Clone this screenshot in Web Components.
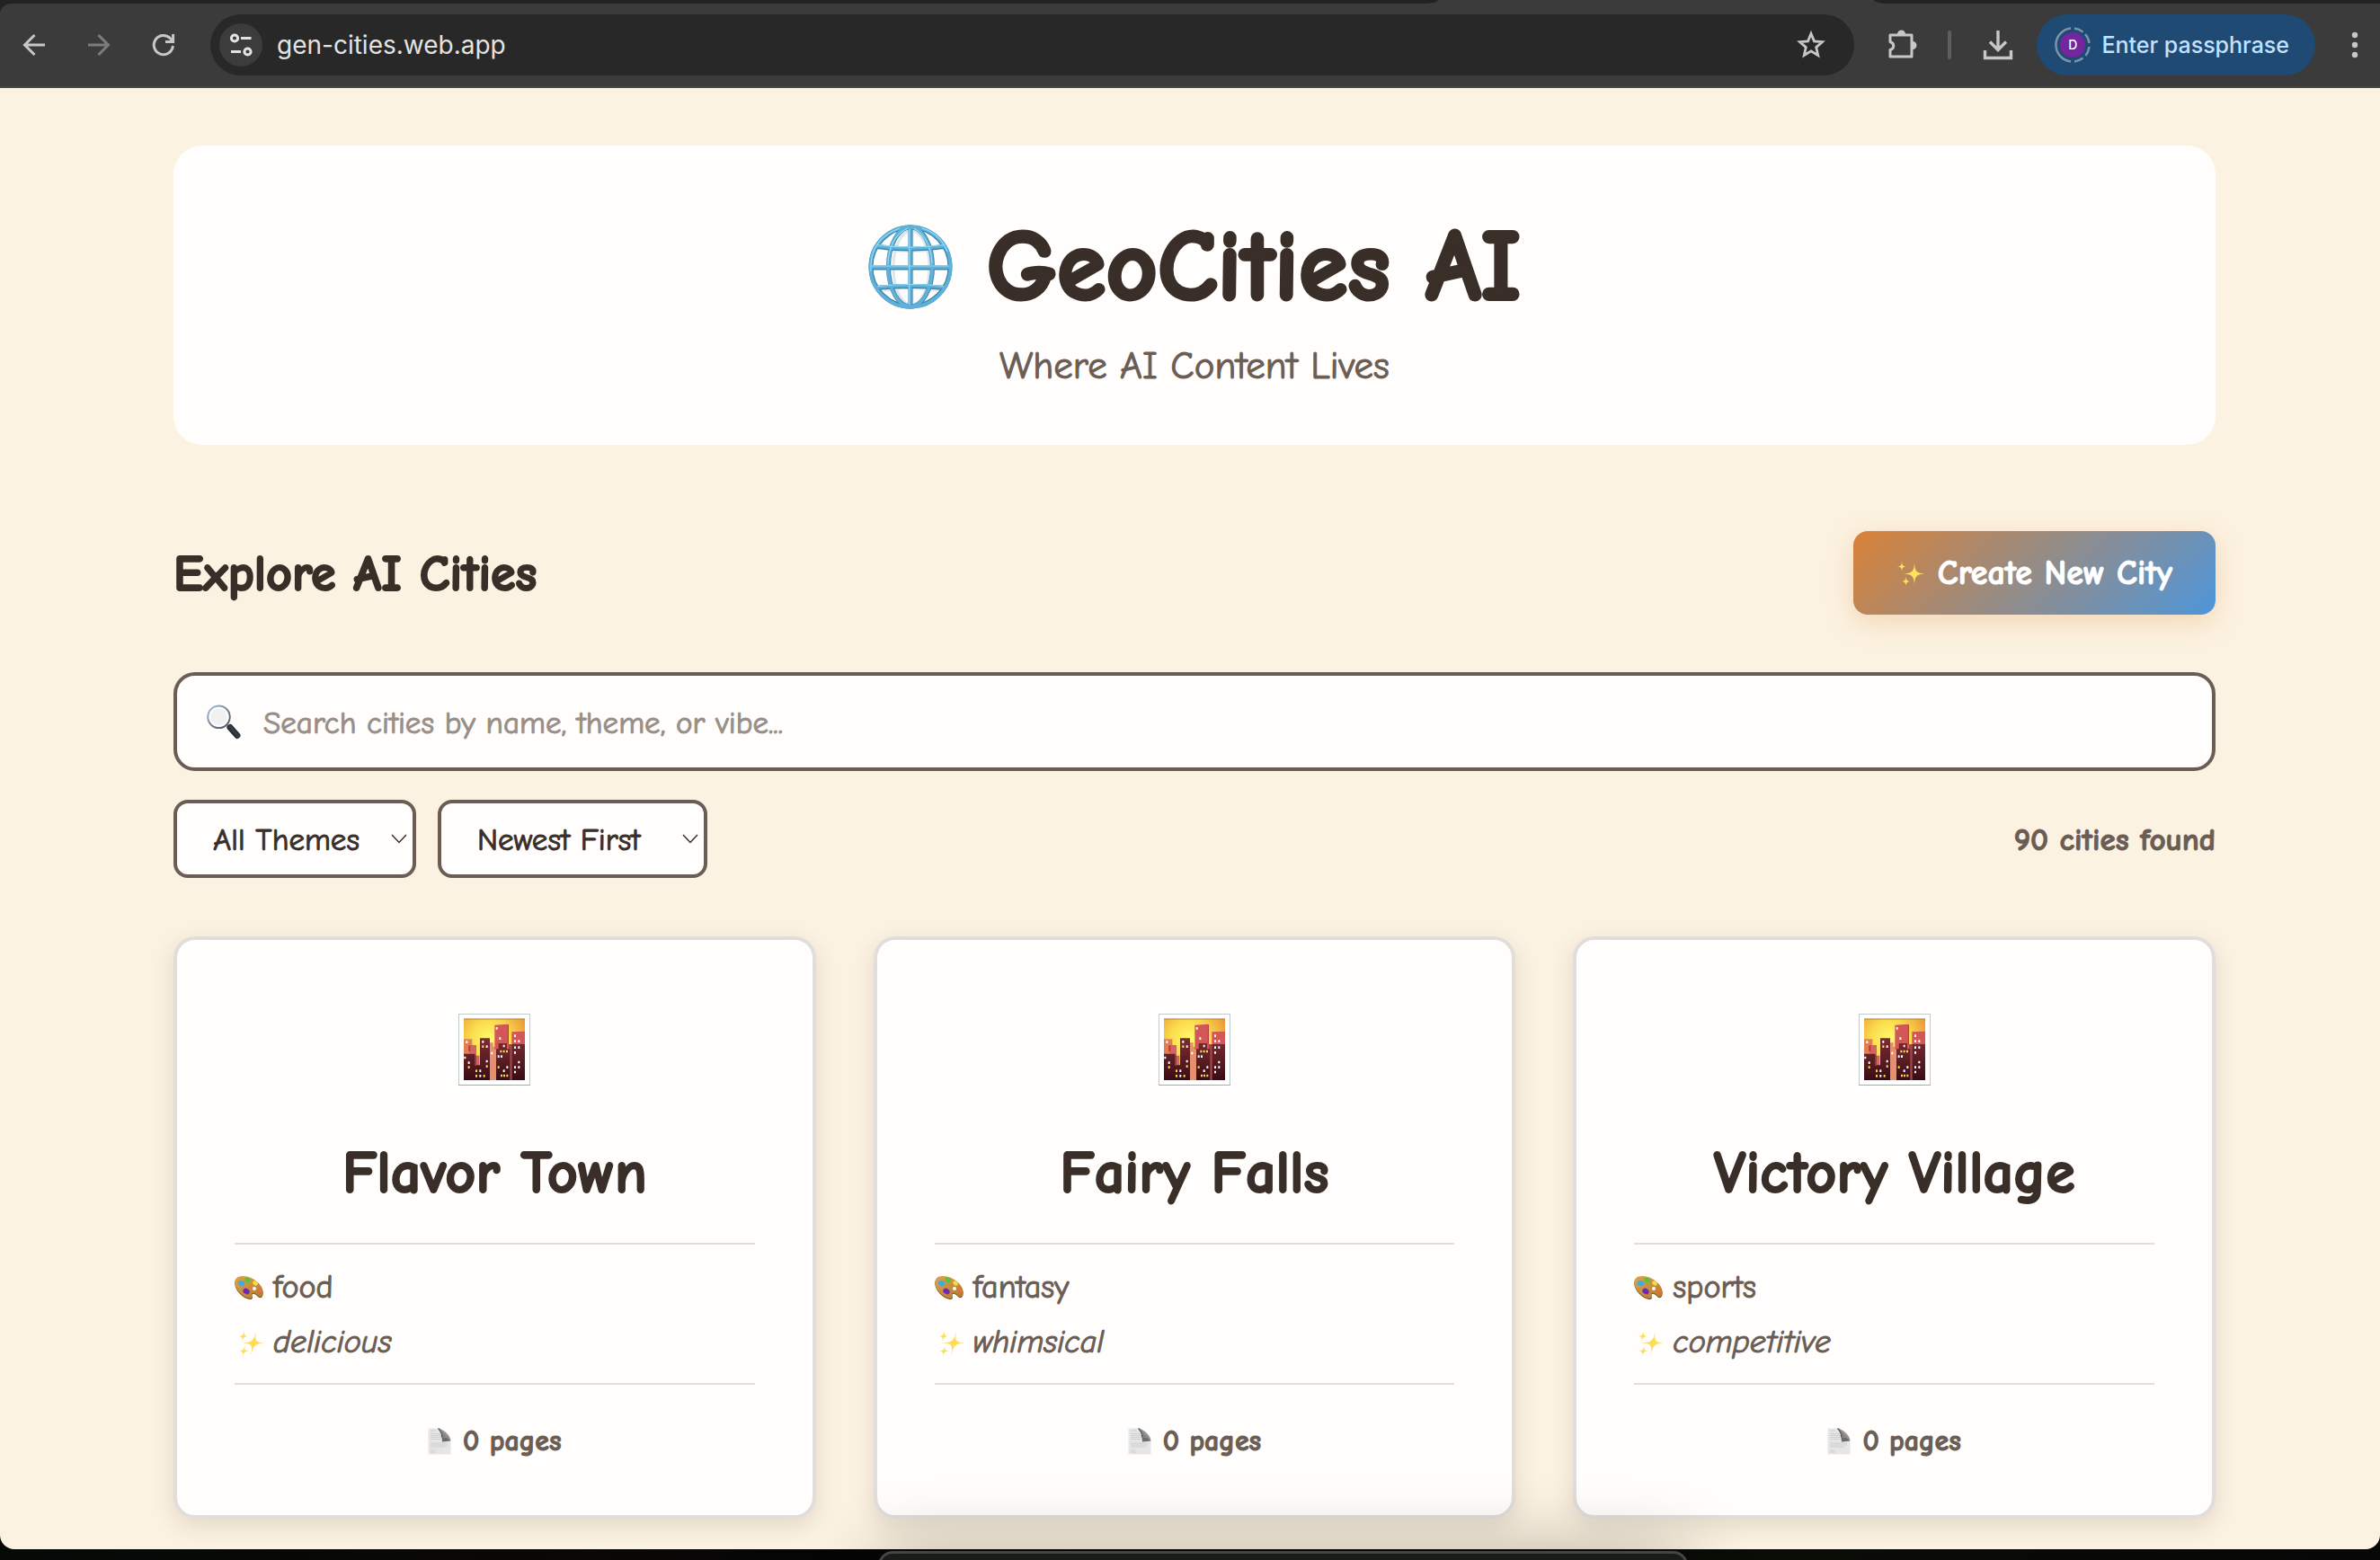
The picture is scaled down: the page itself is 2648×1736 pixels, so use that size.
<!DOCTYPE html>
<html lang="en">
<head>
<meta charset="utf-8">
<meta name="viewport" content="width=device-width, initial-scale=1">
<title>GeoCities AI</title>
<style>
  html { height: 100%; }
  body {
    margin: 0;
    min-height: 100%;
    display: flex;
    background: #060706;
    --ink: #3a2e29;
    --muted: #6b5d54;
    --paper: #fffefc;
    --sand: #fcf2e1;
    --line: #e0dddb;
    --chrome: #3b3b3b;
    --chrome-icon: #c7c7c7;
    font-family: "Comic Neue", "Open Sans", sans-serif;
    color: var(--ink);
  }
</style>
</head>
<body>
<app-shell></app-shell>

<script>
const define = (name, html, setup) => {
  const template = document.createElement('template');
  template.innerHTML = html;
  customElements.define(name, class extends HTMLElement {
    constructor() {
      super();
      this.attachShadow({ mode: 'open' }).append(template.content.cloneNode(true));
    }
    connectedCallback() { if (setup) setup.call(this, this.shadowRoot); }
  });
};

const star = (x, y, r) => {
  const a = r * .03, b = r * .14;
  return `<path d="M${x} ${y - r}C${x + a} ${y - b} ${x + b} ${y - a} ${x + r} ${y}C${x + b} ${y + a} ${x + a} ${y + b} ${x} ${y + r}C${x - a} ${y + b} ${x - b} ${y + a} ${x - r} ${y}C${x - b} ${y - a} ${x - a} ${y - b} ${x} ${y - r}Z"/>`;
};

const windows = (points, color) =>
  points.map(([x, y]) => `<rect x="${x}" y="${y}" width="6" height="8" rx="1" fill="${color}"/>`).join('');

const ART = {
  globe: `<svg viewBox="0 0 94 94">
    <g fill="none" stroke="#dfe6ea" stroke-width="3"><path d="M49 8v78M18 27q30 5 60 0M18 73q30-5 60 0"/><ellipse cx="48" cy="48" rx="20" ry="41"/></g>
    <g fill="none" stroke="#3f86ad" stroke-width="5">
      <circle cx="47" cy="47" r="44"/><ellipse cx="47" cy="47" rx="24.5" ry="44"/>
      <path d="M47 3v88M3 48h88M9.500 24.500q37.500 5 75 0M9 70.500q38-4 76 0"/></g>
    <g fill="none" stroke="#5fb1da" stroke-width="3.600">
      <circle cx="47" cy="47" r="44.6"/><ellipse cx="46.700" cy="47" rx="24.500" ry="44"/>
      <path d="M46.600 3v88M3 47.200h88M9.500 23.700q37.500 5 75 0M9 69.700q38-4 76 0"/></g>
    <g fill="none" stroke="#8fdcf6" stroke-width="1.200">
      <path d="M3.500 46h87M10 22.500q37 5 74 0M10 68.500q37-4 74 0M45.600 5v84M22 44q1-30 22-40M71 44q-1-28-20-40M3 52q-2-36 32-48M60 4q20 6 28 26"/></g>
  </svg>`,
  search: `<svg viewBox="0 0 40 40">
    <defs><linearGradient id="h" x1="0" y1="1" x2="1" y2="0"><stop offset="0" stop-color="#101214"/><stop offset=".55" stop-color="#3a4046"/><stop offset="1" stop-color="#0c0d0f"/></linearGradient>
    <linearGradient id="r" x1="0" y1="0" x2="1" y2="1"><stop offset="0" stop-color="#a9c6e6"/><stop offset=".5" stop-color="#7a838d"/><stop offset="1" stop-color="#4d555d"/></linearGradient></defs>
    <path d="M24 24l4 4" stroke="#8e959b" stroke-width="3"/>
    <path d="M27 26.500L35 35.500" stroke="url(#h)" stroke-width="7" stroke-linecap="round"/>
    <circle cx="14.500" cy="14.800" r="12.300" fill="#f1f1f2" stroke="url(#r)" stroke-width="2"/>
    <circle cx="14.500" cy="14.800" r="10" fill="none" stroke="#fff" stroke-width="1.500"/>
  </svg>`,
  sparkles: `<svg viewBox="0 0 32 32">
    <defs><radialGradient id="s" cx=".5" cy=".5" r=".5"><stop offset="0" stop-color="#ffe455"/><stop offset=".5" stop-color="#fde069"/><stop offset="1" stop-color="#e9b66c"/></radialGradient></defs>
    <g fill="url(#s)">${star(20, 15.5, 14)}${star(6, 7.5, 6.5)}${star(10.5, 24, 6.5)}</g>
  </svg>`,
  slanted: `<svg viewBox="0 0 32 32">
    <defs><radialGradient id="s" cx=".5" cy=".5" r=".5"><stop offset="0" stop-color="#ffdc42"/><stop offset=".5" stop-color="#fde070"/><stop offset="1" stop-color="#f2c898"/></radialGradient></defs>
    <g fill="url(#s)" transform="translate(4.500 1) skewX(-12)">${star(20, 15.5, 14)}${star(7, 8, 7)}${star(11, 24.5, 7)}</g>
  </svg>`,
  palette: `<svg viewBox="0 0 32 26">
    <defs><linearGradient id="w" x1="0" y1="0" x2="1" y2="1"><stop offset="0" stop-color="#dba54b"/><stop offset="1" stop-color="#b4792e"/></linearGradient></defs>
    <path transform="translate(0 1)" fill="#6f4417" d="M9 0C3 0 0 3 .3 8 .8 15 9 24 17 25c2.500.2 3.500-1.400 2.600-3.200-.9-2 .4-3.600 2.400-2.800 3 1 4.500 5 7.500 4 3-2 3-8-1-13C24 4 16 0 9 0z"/>
    <path fill="url(#w)" d="M9 0C3 0 0 3 .3 8 .8 15 9 24 17 25c2.500.2 3.500-1.400 2.600-3.200-.9-2 .4-3.600 2.400-2.800 3 1 4.500 5 7.500 4 3-2 3-8-1-13C24 4 16 0 9 0z"/>
    <ellipse cx="22" cy="14" rx="2" ry="1.900" fill="#fffefc"/>
    <ellipse cx="7.500" cy="8" rx="3.800" ry="3" fill="#45a9dc" transform="rotate(25 7.500 8)"/>
    <ellipse cx="14.500" cy="4.500" rx="3.200" ry="2.500" fill="#56c43a" transform="rotate(25 14.500 4.500)"/>
    <ellipse cx="23" cy="8" rx="3" ry="2.200" fill="#f7d94a" transform="rotate(35 23 8)"/>
    <ellipse cx="28.300" cy="16" rx="1.700" ry="2.600" fill="#ef6a55" transform="rotate(-30 28.300 16)"/>
    <ellipse cx="13" cy="17" rx="3.800" ry="3" fill="#6f27b8" transform="rotate(30 13 17)"/>
  </svg>`,
  page: `<svg viewBox="0 0 26 30">
    <defs><linearGradient id="f" x1="0" y1="1" x2="1" y2="0"><stop offset="0" stop-color="#555"/><stop offset=".5" stop-color="#8a8a8a"/><stop offset="1" stop-color="#f2f2f2"/></linearGradient></defs>
    <path d="M.5.5H14L25.500 14v15.500H.5z" fill="#e6e6e6"/>
    <path d="M3 3h6M3 6.500h11M3 8.500h11M3 10.500h11M3 12.500h11M3 17h19M3 19h19M3 21h16M3 25h5M3 27h6" stroke="#cdcdcd" stroke-width=".9"/>
    <path d="M12 .5c3 3 4 6 3.500 10 4-.6 8 .5 10 3.500C25 8 18 2 12 .5z" fill="url(#f)"/>
    <path d="M15.500 10.500c4-.6 8 .5 10 4l-9.500 1z" fill="#6c6c6c"/>
    <path d="M11.500.5c3 3 4.400 6 4 10" stroke="#555" stroke-width="1.200" fill="none"/>
  </svg>`,
  city: `<svg viewBox="0 0 240 240">
    <defs>
      <radialGradient id="k" cx=".42" cy=".35" r=".7"><stop offset="0" stop-color="#fffb70"/><stop offset=".45" stop-color="#fbdc4c"/><stop offset="1" stop-color="#e98f35"/></radialGradient>
      <linearGradient id="d" x1="0" y1="82" x2="0" y2="222" gradientUnits="userSpaceOnUse"><stop offset="0" stop-color="#7a2c31"/><stop offset=".5" stop-color="#5c1d24"/><stop offset="1" stop-color="#3a0b14"/></linearGradient>
    </defs>
    <rect x="1.500" y="1.500" width="237" height="237" fill="#fff" stroke="#c2cccf" stroke-width="3"/>
    <path d="M0 238.500h240" stroke="#a2aab2" stroke-width="3"/>
    <rect x="18" y="17" width="204" height="205" fill="url(#k)"/>
    <path d="M18 18h204" stroke="#b9892f" stroke-width="3"/>
    <path d="M18 85h28v60H18z" fill="#e08052"/>
    <path d="M36 105h24v35h10v50H18v-56h18z" fill="#cf6665"/>
    <path d="M34 106h6v20h-6z" fill="#c8322a"/>
    <path d="M104 97h12v14h10v111h-22z" fill="#e58f6c"/>
    <path d="M121 38l44-3 3 4v63h10V61l44-2v60H121z" fill="#d25756"/>
    <path d="M165 35l3 4v63h-4z" fill="#b93f42"/>
    <path d="M168 102h14v120h-14z" fill="#a04445"/>
    <path d="M18 134h36v38h18V82h33v140H18zM126 118h8V99h28v19h10v104h-46zM179 102h43v120h-43z" fill="url(#d)"/>
    <path d="M54 134l6 6v34h-6z" fill="#8d3f42"/>
    ${windows([[25,91],[79,90],[92,106],[92,155],[19,143],[32,160],[70,187],[70,204],[109,128],[125,45],[136,79],[149,104],[131,139],[141,139],[149,187],[160,175],[186,70],[186,88],[199,88],[186,109],[199,109],[186,126],[199,158],[186,175],[199,175],[186,191]], '#fff')}
    ${windows([[79,106],[32,175],[57,187],[57,204],[83,204],[92,172],[139,122],[149,122],[159,122],[131,175],[141,203],[150,203],[160,203]], '#f3dc4e')}
  </svg>`
};

define('art-icon', `
  <style>
    :host { display: block; flex: none; width: var(--art-w, 32px); height: var(--art-h, 32px); }
    svg { display: block; width: 100%; height: 100%; }
  </style>`,
  function (root) {
    if (!root.querySelector('svg')) root.append(document.createRange().createContextualFragment(ART[this.getAttribute('name')]));
  });

define('chrome-button', `
  <style>
    :host { display: block; flex: none; }
    button { display: grid; place-items: center; width: 48px; height: 48px; padding: 0; border: 0; border-radius: 24px; background: var(--fill, transparent); color: var(--tint, var(--chrome-icon)); }
  </style>
  <button type="button"><slot></slot></button>`,
  function (root) { root.querySelector('button').setAttribute('aria-label', this.getAttribute('label')); });

define('browser-bar', `
  <style>
    :host { display: block; background: #202322; font-family: Inter, sans-serif; }
    .strip { display: flex; justify-content: space-between; height: 4px; background: var(--chrome); }
    .strip i { display: block; background: #202322; }
    .before { width: 1600px; border-bottom-right-radius: 16px 4px; }
    .after { width: 563px; border-bottom-left-radius: 16px 4px; }
    .bar { display: flex; align-items: center; box-sizing: border-box; height: 94px; padding: 0 4px 0 14px; background: var(--chrome); border-bottom: 2px solid #464846; border-top-left-radius: 12px; }
    .nav { display: flex; gap: 24px; margin-right: 28px; }
    .address { flex: 1; display: flex; align-items: center; gap: 16px; box-sizing: border-box; height: 68px; padding: 0 24px 0 10px; border-radius: 34px; background: #282828; }
    input { flex: 1; min-width: 0; padding: 0; border: 0; background: none; outline: 0; font: 400 28px/40px Inter, sans-serif; color: #e3e3e3; }
    .tools { display: flex; align-items: center; margin-left: 30px; }
    .rule { width: 4px; height: 32px; margin: 0 28px 0 26px; border-radius: 2px; background: #5e5e5e; }
    .profile { display: flex; align-items: center; gap: 12px; height: 68px; margin: 0 20px 0 19px; padding: 0 29px 0 20px; border: 0; border-radius: 34px; background: #1f4a73; color: #c2e2ff; font: 500 25px/40px Inter, sans-serif; }
    .avatar { display: grid; place-items: center; width: 40px; height: 40px; }
    .avatar svg, .avatar span { grid-area: 1 / 1; }
    .avatar span { width: 28px; height: 28px; border-radius: 14px; background: #7326a0; color: #fff; font: 500 14px/28px Inter, sans-serif; text-align: center; }
    svg { display: block; fill: none; stroke: currentColor; stroke-width: 3; }
  </style>
  <div class="strip"><i class="before"></i><i class="after"></i></div>
  <div class="bar">
    <div class="nav">
      <chrome-button label="Back"><svg width="32" height="32" viewBox="0 0 32 32"><path d="M28 16H6M16.500 5L5.500 16l11 11"/></svg></chrome-button>
      <chrome-button label="Forward" style="--tint:#7d7d7d"><svg width="32" height="32" viewBox="0 0 32 32"><path d="M4 16h22M15.500 5l11 11-11 11"/></svg></chrome-button>
      <chrome-button label="Reload"><svg width="32" height="32" viewBox="0 0 32 32"><path d="M26.400 17A10.600 10.600 0 1 1 23.500 8.700L26 11.500M26.600 4v8.500H18"/></svg></chrome-button>
    </div>
    <div class="address">
      <chrome-button label="View site information" style="--fill:#3c3c3c;--tint:#e3e3e3"><svg width="28" height="28" viewBox="0 0 28 28"><circle cx="7" cy="6.500" r="3.600"/><path d="M14 6.500h11.500M3 21.500h11"/><circle cx="21.500" cy="21.500" r="3.600"/></svg></chrome-button>
      <input type="text" aria-label="Address" value="gen-cities.web.app">
      <chrome-button label="Bookmark this tab"><svg width="36" height="36" viewBox="0 0 36 36"><path stroke-width="2.800" d="M18 5.500l3.500 8.400 9 .8-6.800 5.900 2 8.900L18 24.800l-7.700 4.700 2-8.900-6.800-5.900 9-.8z"/></svg></chrome-button>
    </div>
    <div class="tools">
      <chrome-button label="Extensions"><svg width="36" height="36" viewBox="0 0 36 36"><path stroke-linejoin="round" d="M4 7h24v24H4v-7.500c5-1.500 5-7.500 0-9z"/><path fill="currentColor" stroke="none" d="M12 6a4.500 4.500 0 0 1 9 0zM29 14a4.500 4.500 0 0 1 0 9z"/></svg></chrome-button>
      <span class="rule"></span>
      <chrome-button label="Downloads"><svg width="36" height="36" viewBox="0 0 36 36"><path stroke-width="3.400" d="M18 2v21M9 14.500l9 9 9-9M3.500 24v8.500h29V24"/></svg></chrome-button>
      <button class="profile" type="button">
        <span class="avatar">
          <svg width="40" height="40" viewBox="0 0 40 40"><path stroke="#7f93a8" stroke-width="2.500" d="M18 1.600A18.500 18.500 0 0 0 18 38.400M22 1.600a18.500 18.500 0 0 1 9.500 4M34 8a18.500 18.500 0 0 1 4.500 10M38.400 22a18.500 18.500 0 0 1-4 10M31.500 34.500a18.500 18.500 0 0 1-9.500 4"/></svg>
          <span>D</span>
        </span>
        Enter passphrase
      </button>
      <chrome-button label="Menu"><svg width="32" height="32" viewBox="0 0 32 32"><g fill="currentColor" stroke="none"><circle cx="16" cy="5" r="3.200"/><circle cx="16" cy="16" r="3.200"/><circle cx="16" cy="27" r="3.200"/></g></svg></chrome-button>
    </div>
  </div>`);

define('site-banner', `
  <style>
    :host { display: flex; flex-direction: column; align-items: center; gap: 14px; padding: 66px 64px 60px; border-radius: 32px; background: var(--paper); }
    h1 { display: flex; align-items: center; gap: 38px; margin: 0; font-size: 111px; line-height: 138px; font-weight: 700; -webkit-text-stroke: 4px currentColor; }
    art-icon { --art-w: 94px; --art-h: 94px; }
    p { margin: 0; font-size: 43px; line-height: 55px; color: var(--muted); -webkit-text-stroke: 1px currentColor; }
  </style>
  <h1><art-icon name="globe"></art-icon><slot></slot></h1>
  <p><slot name="tagline"></slot></p>`);

define('create-button', `
  <style>
    :host { display: block; flex: none; }
    button { display: flex; align-items: center; gap: 14px; padding: 25px 48px 23px; border: 0; border-radius: 16px; background: linear-gradient(135deg, #d98238, #4e96da); box-shadow: 0 8px 30px rgba(217, 130, 56, .25); color: #fff; font: inherit; font-size: 38px; line-height: 45px; font-weight: 700; -webkit-text-stroke: 1px currentColor; }
  </style>
  <button type="button"><art-icon name="sparkles"></art-icon><span><slot></slot></span></button>`);

define('search-box', `
  <style>
    :host { display: block; }
    label { display: flex; align-items: center; gap: 24px; padding: 0 32px; border: 4px solid var(--muted); border-radius: 24px; background: var(--paper); }
    art-icon { --art-w: 40px; --art-h: 40px; }
    input { flex: 1; min-width: 0; padding: 2px 0 0; border: 0; outline: 0; background: none; font: inherit; font-size: 35px; line-height: 44px; height: 100px; color: var(--ink); }
    input::placeholder { color: #998f88; opacity: 1; -webkit-text-stroke: 1px currentColor; }
  </style>
  <label><art-icon name="search"></art-icon><input type="search" aria-label="Search cities" placeholder="Search cities by name, theme, or vibe..."></label>`,
  function (root) { root.querySelector('input').style.boxSizing = 'content-box'; });

define('pick-list', `
  <style>
    :host { display: grid; width: var(--w); }
    select, svg { grid-area: 1 / 1; }
    select { appearance: none; box-sizing: border-box; width: 100%; height: 87px; padding: 3px 40px 0; border: 4px solid var(--muted); border-radius: 16px; background: var(--paper); color: var(--ink); font: inherit; font-size: 35px; line-height: 44px; -webkit-text-stroke: 1px currentColor; }
    svg { align-self: center; justify-self: end; margin-right: 10px; pointer-events: none; z-index: 1; fill: none; stroke: var(--ink); stroke-width: 1.500; }
  </style>
  <select></select>
  <svg width="18" height="11" viewBox="0 0 18 11"><path d="M1 1l8 8.500L17 1"/></svg>`,
  function (root) {
    const select = root.querySelector('select');
    select.setAttribute('aria-label', this.getAttribute('label'));
    select.append(new Option(this.getAttribute('value')));
  });

define('city-card', `
  <style>
    :host { display: block; min-width: 0; }
    article { display: flex; flex-direction: column; padding: 64px 64px 62px; border: 4px solid var(--line); border-radius: 24px; background: var(--paper); box-shadow: 0 8px 24px rgba(58, 46, 41, .13); }
    .cover { display: grid; place-items: center; height: 116px; --art-w: 80px; --art-h: 80px; }
    h3 { margin: 35px 0 32px; font-size: 66px; line-height: 90px; font-weight: 700; text-align: center; -webkit-text-stroke: 2px currentColor; }
    ul { margin: 0; padding: 17px 0 15px; list-style: none; border: solid var(--line); border-width: 2px 0; }
    li { display: flex; align-items: center; gap: 11px; font-size: 36px; line-height: 61px; color: var(--muted); -webkit-text-stroke: 1px currentColor; }
    .theme { --art-h: 26px; }
    .vibe { font-style: italic; }
    footer { display: flex; align-items: center; justify-content: center; gap: 13px; margin-top: 43px; font-size: 32px; line-height: 40px; font-weight: 700; color: var(--muted); --art-w: 26px; --art-h: 30px; -webkit-text-stroke: 1px currentColor; }
  </style>
  <article>
    <div class="cover"><art-icon name="city"></art-icon></div>
    <h3><slot></slot></h3>
    <ul>
      <li class="theme"><art-icon name="palette"></art-icon><slot name="theme"></slot></li>
      <li class="vibe"><art-icon name="slanted"></art-icon><slot name="vibe"></slot></li>
    </ul>
    <footer><art-icon name="page"></art-icon><slot name="pages"></slot></footer>
  </article>`);

define('city-page', `
  <style>
    :host { display: block; box-sizing: border-box; padding: 64px 183px 34px 193px; background: var(--sand); border-bottom-left-radius: 16px; border-bottom-right-radius: 16px; }
    .intro { display: flex; align-items: center; justify-content: space-between; margin: 96px 0 64px; }
    h2 { margin: 0; padding-top: 3px; font-size: 56px; line-height: 68px; font-weight: 700; -webkit-text-stroke: 2px currentColor; }
    .filters { display: flex; align-items: center; gap: 24px; margin: 32px 0 65px; }
    .count { margin: 0 0 0 auto; padding-top: 3px; font-size: 35px; line-height: 44px; font-weight: 700; color: var(--muted); -webkit-text-stroke: 1px currentColor; }
    .grid { display: grid; grid-template-columns: repeat(3, 1fr); gap: 64px; }
  </style>
  <site-banner>GeoCities AI<span slot="tagline">Where AI Content Lives</span></site-banner>
  <div class="intro"><h2>Explore AI Cities</h2><create-button>Create New City</create-button></div>
  <search-box></search-box>
  <div class="filters">
    <pick-list label="Theme" value="All Themes" style="--w:270px"></pick-list>
    <pick-list label="Sort order" value="Newest First" style="--w:300px"></pick-list>
    <p class="count">90 cities found</p>
  </div>
  <div class="grid">
    <city-card>Flavor Town<span slot="theme">food</span><span slot="vibe">delicious</span><span slot="pages">0 pages</span></city-card>
    <city-card>Fairy Falls<span slot="theme">fantasy</span><span slot="vibe">whimsical</span><span slot="pages">0 pages</span></city-card>
    <city-card>Victory Village<span slot="theme">sports</span><span slot="vibe">competitive</span><span slot="pages">0 pages</span></city-card>
  </div>`);

define('desk-edge', `
  <style>
    :host { display: grid; height: 12px; padding-top: 2px; box-sizing: border-box; justify-items: center; clip-path: inset(-200px 0 0 0); background: linear-gradient(90deg, #050a07, #0a0706 25%, #050505 35%, #0a0c06 75%, #070707); }
    .panel { width: 34%; height: 60px; margin-left: 207px; box-sizing: border-box; border: 3px solid #454644; border-radius: 16px; background: #1a1c19; box-shadow: 0 4px 80px rgba(0, 0, 0, .32); }
  </style>
  <div class="panel"></div>`);

define('app-shell', `
  <style>
    :host { flex: 1; min-width: 0; display: flex; flex-direction: column; height: 100vh; overflow: hidden; }
    browser-bar { flex: none; }
    city-page { flex: 1; min-height: 0; }
    desk-edge { flex: none; z-index: 1; }
  </style>
  <browser-bar></browser-bar>
  <city-page></city-page>
  <desk-edge></desk-edge>`);
</script>
</body>
</html>
